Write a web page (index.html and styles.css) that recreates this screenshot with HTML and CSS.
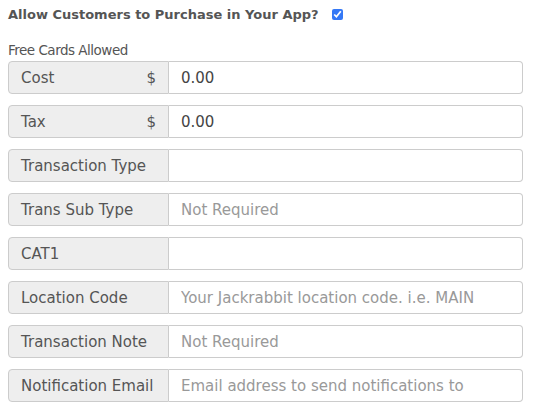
FILE: index.html
```html
<!DOCTYPE html>
<html>
<head>
<meta charset="utf-8">
<link rel="stylesheet" href="styles.css">
</head>
<body>
<div class="form">
  <div class="heading">
    <span class="heading-text">Allow Customers to Purchase in Your App?</span>
    <input type="checkbox" class="check" checked>
  </div>
  <div class="sub">Free Cards Allowed</div>
  <div class="group">
    <div class="label"><span>Cost</span><span>$</span></div>
    <input class="field" type="text" value="0.00">
  </div>
  <div class="group">
    <div class="label"><span>Tax</span><span>$</span></div>
    <input class="field" type="text" value="0.00">
  </div>
  <div class="group">
    <div class="label"><span>Transaction Type</span></div>
    <input class="field" type="text" value="">
  </div>
  <div class="group">
    <div class="label"><span>Trans Sub Type</span></div>
    <input class="field" type="text" placeholder="Not Required">
  </div>
  <div class="group">
    <div class="label"><span>CAT1</span></div>
    <input class="field" type="text" value="">
  </div>
  <div class="group">
    <div class="label"><span>Location Code</span></div>
    <input class="field" type="text" placeholder="Your Jackrabbit location code. i.e. MAIN">
  </div>
  <div class="group">
    <div class="label"><span>Transaction Note</span></div>
    <input class="field" type="text" placeholder="Not Required">
  </div>
  <div class="group">
    <div class="label"><span>Notification Email</span></div>
    <input class="field" type="text" placeholder="Email address to send notifications to">
  </div>
</div>
</body>
</html>
```
FILE: styles.css
```css
html, body {
  margin: 0;
  padding: 0;
  background: #fff;
}
body {
  padding: 8px;
  font-family: "DejaVu Sans", "Liberation Sans", sans-serif;
  color: #555;
}
.form {
  width: 515px;
}
.heading {
  display: flex;
  align-items: center;
  gap: 13px;
  height: 12px;
}
.heading-text {
  font-weight: 700;
  font-size: 13px;
  color: #555;
}
.check {
  margin: 0;
  width: 11px;
  height: 11px;
  accent-color: #3478f6;
}
.sub {
  margin-top: 21px;
  font-size: 13.5px;
  letter-spacing: -0.5px;
  line-height: 18px;
  color: #555;
}
.group {
  display: flex;
  height: 33px;
  margin-top: 2px;
}
.group + .group {
  margin-top: 11px;
}
.label {
  box-sizing: border-box;
  width: 161px;
  display: flex;
  align-items: center;
  justify-content: space-between;
  padding: 0 12px;
  background: #eee;
  border: 1px solid #ccc;
  border-radius: 4px 0 0 4px;
  font-size: 15px;
  color: #555;
}
.field {
  flex: 1;
  box-sizing: border-box;
  height: 33px;
  margin: 0;
  padding: 0 12px;
  border: 1px solid #ccc;
  border-left: none;
  border-radius: 0 4px 4px 0;
  font-family: "DejaVu Sans", "Liberation Sans", sans-serif;
  font-size: 15px;
  color: #444;
  outline: none;
}
.field::placeholder {
  color: #999;
}
```
